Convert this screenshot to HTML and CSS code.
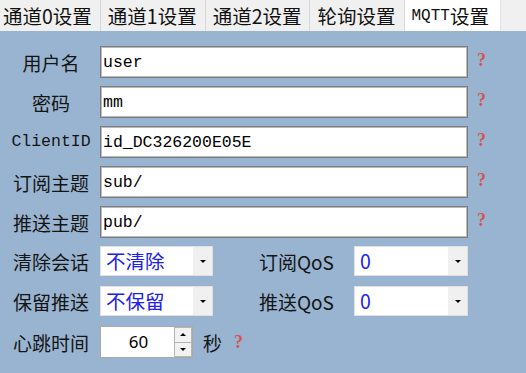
FILE: index.html
```html
<!DOCTYPE html>
<html lang="zh-CN">
<head>
    <meta charset="UTF-8">
    <title>MQTT设置</title>
    <link rel="stylesheet" href="styles.css">
</head>
<body>
    <div class="tabs">
        <div class="tab">通道0设置</div>
        <div class="tab">通道1设置</div>
        <div class="tab">通道2设置</div>
        <div class="tab">轮询设置</div>
        <div class="tab active"><span class="mono">MQTT</span>设置</div>
    </div>

    <div class="panel">
        <div class="row">
            <label class="label" for="user">用户名</label>
            <input class="textbox" id="user" type="text" value="user">
            <span class="help">?</span>
        </div>
        <div class="row">
            <label class="label" for="pwd">密码</label>
            <input class="textbox" id="pwd" type="text" value="mm">
            <span class="help">?</span>
        </div>
        <div class="row">
            <label class="label mono" for="cid">ClientID</label>
            <input class="textbox" id="cid" type="text" value="id_DC326200E05E">
            <span class="help">?</span>
        </div>
        <div class="row">
            <label class="label" for="sub">订阅主题</label>
            <input class="textbox" id="sub" type="text" value="sub/">
            <span class="help">?</span>
        </div>
        <div class="row">
            <label class="label" for="pub">推送主题</label>
            <input class="textbox" id="pub" type="text" value="pub/">
            <span class="help">?</span>
        </div>

        <div class="pair-row">
            <span class="label">清除会话</span>
            <div class="combo"><span class="combo-value">不清除</span><span class="combo-btn"><i class="caret"></i></span></div>
            <span></span>
            <span class="label left">订阅QoS</span>
            <div class="combo"><span class="combo-value">0</span><span class="combo-btn"><i class="caret"></i></span></div>
        </div>
        <div class="pair-row">
            <span class="label">保留推送</span>
            <div class="combo"><span class="combo-value">不保留</span><span class="combo-btn"><i class="caret"></i></span></div>
            <span></span>
            <span class="label left">推送QoS</span>
            <div class="combo"><span class="combo-value">0</span><span class="combo-btn"><i class="caret"></i></span></div>
        </div>

        <div class="beat-row">
            <span class="label">心跳时间</span>
            <div class="spin">
                <span class="spin-value">60</span>
                <div class="spin-btns">
                    <span class="spin-btn"><i class="caret up"></i></span>
                    <span class="spin-btn"><i class="caret"></i></span>
                </div>
            </div>
            <span class="unit">秒</span>
            <span class="help small">?</span>
        </div>
    </div>
</body>
</html>
```

FILE: styles.css
```css
body {
    margin: 0;
    height: 373px;
    background-color: #99b4d1;
    font-family: "Noto Sans CJK SC", "Noto Sans", sans-serif;
    color: #141414;
    overflow: hidden;
}
.mono {
    font-family: "Liberation Mono", "Noto Sans CJK SC", monospace;
    font-size: 16.5px;
}
.tabs {
    display: flex;
    height: 31px;
    background-color: #f0f0f0;
}
.tab {
    display: flex;
    align-items: center;
    padding: 0 8px 0 7px;
    font-size: 19.5px;
    line-height: 1;
    color: #111;
    border-right: 1px solid #d8d8d8;
}
.tab:first-child {
    padding-left: 3px;
}
.tab.active {
    background-color: #fff;
    padding: 0 11px 0 7px;
    border-right: 1px solid #e2e2e2;
}
.tab .mono {
    font-size: 16px;
}
.panel {
    padding-top: 15px;
}
.row {
    display: grid;
    grid-template-columns: 100px 368px auto;
    align-items: center;
    height: 32px;
    margin-bottom: 8px;
}
.label {
    text-align: center;
    padding-left: 2px;
    font-size: 19px;
    line-height: 1;
    white-space: nowrap;
}
.label.mono {
    font-size: 16.5px;
}
.label.left {
    text-align: left;
    padding-left: 0;
}
.textbox {
    box-sizing: border-box;
    height: 32px;
    margin: 0;
    padding: 0 2px;
    border: 1px solid #7c7c7c;
    box-shadow: inset 1px 1px 0 #b9b9b9, inset -1px -1px 0 #b9b9b9;
    background-color: #fff;
    font-family: "Liberation Mono", monospace;
    font-size: 16.5px;
    color: #000;
    outline: none;
}
.help {
    padding-left: 9px;
    font-family: "Liberation Serif", serif;
    font-weight: bold;
    font-size: 18px;
    line-height: 1;
    color: #d65454;
    margin-top: -4px;
}
.pair-row {
    display: grid;
    grid-template-columns: 100px 113px 46px 95px 114px;
    align-items: center;
    height: 30px;
    margin-top: 4px;
    margin-bottom: 10px;
}
.pair-row + .pair-row {
    margin-top: 0;
}
.combo {
    box-sizing: border-box;
    display: flex;
    height: 30px;
    background-color: #fff;
    border: 1px solid #e0e0e0;
}
.combo-value {
    flex: 1;
    padding-left: 5px;
    font-size: 19.5px;
    line-height: 28px;
    color: #2020f2;
}
.combo-btn {
    width: 19px;
    display: flex;
    align-items: center;
    justify-content: center;
    background-color: #f0f0f0;
}
.caret {
    width: 0;
    height: 0;
    border-left: 3px solid transparent;
    border-right: 3px solid transparent;
    border-top: 3px solid #000;
}
.caret.up {
    border-top: none;
    border-bottom: 3px solid #000;
}
.beat-row {
    display: flex;
    align-items: center;
    height: 32px;
}
.beat-row .label {
    width: 98px;
}
.spin {
    box-sizing: border-box;
    display: flex;
    width: 93px;
    height: 32px;
    background-color: #fff;
    border: 1px solid #a9a9a9;
}
.spin-value {
    flex: 1;
    text-align: center;
    font-family: "Noto Sans", sans-serif;
    font-size: 17px;
    line-height: 30px;
    color: #000;
    padding-left: 2px;
}
.spin-btns {
    display: flex;
    flex-direction: column;
    width: 18px;
}
.spin-btn {
    flex: 1;
    display: flex;
    align-items: center;
    justify-content: center;
    background-color: #f2f2f2;
    border: 1px solid #b4b4b4;
}
.spin-btn + .spin-btn {
    border-top: none;
}
.unit {
    margin-left: 10px;
    font-size: 19px;
    line-height: 1;
}
.help.small {
    padding-left: 12px;
    margin-top: 0;
}
```
